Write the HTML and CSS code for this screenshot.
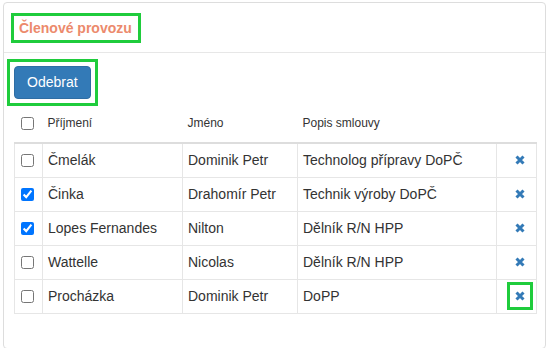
FILE: index.html
```
<!DOCTYPE html>
<html lang="cs">

<head>
    <meta charset="UTF-8">
    <meta name="viewport" content="width=device-width, initial-scale=1.0">
    <title>Členové provozu</title>
    <link rel="stylesheet" href="styles.css">
</head>

<body>
    <div class="panel">
        <div class="panel-heading">
            <span class="mark title">Členové provozu</span>
        </div>
        <div class="panel-body">
            <div class="mark btn-wrap">
                <button class="btn">Odebrat</button>
            </div>
            <table class="members">
                <colgroup>
                    <col class="c-check">
                    <col class="c-last">
                    <col class="c-first">
                    <col class="c-desc">
                    <col class="c-action">
                </colgroup>
                <thead>
                    <tr>
                        <th class="check"><input type="checkbox"></th>
                        <th>Příjmení</th>
                        <th>Jméno</th>
                        <th>Popis smlouvy</th>
                        <th></th>
                    </tr>
                </thead>
                <tbody>
                    <tr>
                        <td class="check"><input type="checkbox"></td>
                        <td>Čmelák</td>
                        <td>Dominik Petr</td>
                        <td>Technolog přípravy DoPČ</td>
                        <td class="action"><span class="remove"><svg viewBox="0 0 10 10"><path d="M1.5 1.5 8.5 8.5 M8.5 1.5 1.5 8.5"/></svg></span></td>
                    </tr>
                    <tr>
                        <td class="check"><input type="checkbox" checked></td>
                        <td>Činka</td>
                        <td>Drahomír Petr</td>
                        <td>Technik výroby DoPČ</td>
                        <td class="action"><span class="remove"><svg viewBox="0 0 10 10"><path d="M1.5 1.5 8.5 8.5 M8.5 1.5 1.5 8.5"/></svg></span></td>
                    </tr>
                    <tr>
                        <td class="check"><input type="checkbox" checked></td>
                        <td>Lopes Fernandes</td>
                        <td>Nilton</td>
                        <td>Dělník R/N HPP</td>
                        <td class="action"><span class="remove"><svg viewBox="0 0 10 10"><path d="M1.5 1.5 8.5 8.5 M8.5 1.5 1.5 8.5"/></svg></span></td>
                    </tr>
                    <tr>
                        <td class="check"><input type="checkbox"></td>
                        <td>Wattelle</td>
                        <td>Nicolas</td>
                        <td>Dělník R/N HPP</td>
                        <td class="action"><span class="remove"><svg viewBox="0 0 10 10"><path d="M1.5 1.5 8.5 8.5 M8.5 1.5 1.5 8.5"/></svg></span></td>
                    </tr>
                    <tr>
                        <td class="check"><input type="checkbox"></td>
                        <td>Procházka</td>
                        <td>Dominik Petr</td>
                        <td>DoPP</td>
                        <td class="action"><span class="remove marked"><svg viewBox="0 0 10 10"><path d="M1.5 1.5 8.5 8.5 M8.5 1.5 1.5 8.5"/></svg></span></td>
                    </tr>
                </tbody>
            </table>
        </div>
    </div>
</body>

</html>
```

FILE: styles.css
```
* {
    padding: 0;
    margin: 0;
    box-sizing: border-box;
}

body {
    font-family: "Liberation Sans", Arial, sans-serif;
    font-size: 14px;
    color: #333;
    background-color: #fff;
}

.panel {
    margin: 2px 4px 0 3px;
    border: 1px solid #ddd;
    border-radius: 4px;
}

.panel-heading {
    padding: 10px 7px 9px;
    border-bottom: 1px solid #e7e7e7;
}

/* zelene oramovani zvyraznenych prvku */
.mark {
    display: inline-block;
    border: 3px solid #1fcc3c;
}

.title {
    padding: 4px 6px 4px 5px;
    font-size: 14px;
    line-height: 16px;
    font-weight: bold;
    color: #ec8a6c;
}

.panel-body {
    padding: 6px 10px 10px;
}

.btn-wrap {
    margin-left: -7px;
    padding: 4px;
}

.btn {
    display: block;
    font-family: inherit;
    font-size: 14px;
    line-height: 19px;
    padding: 6px 12px;
    color: #fff;
    background-color: #337ab7;
    border: 1px solid #2e6da4;
    border-radius: 4px;
}

.members {
    width: 522px;
    margin: 4px 0 24px;
    table-layout: fixed;
    border-collapse: collapse;
}

.c-check { width: 28px; }
.c-last { width: 140px; }
.c-first { width: 115px; }
.c-desc { width: 199px; }
.c-action { width: 40px; }

.members th {
    font-size: 12px;
    font-weight: normal;
    line-height: 17px;
    text-align: left;
    padding: 5px 5px 10px;
    vertical-align: middle;
    border-bottom: 2px solid #ddd;
}

.members td {
    padding: 6px 5px 7px;
    line-height: 20px;
    vertical-align: middle;
    border: 1px solid #e6e6e6;
}

.members input[type="checkbox"] {
    display: block;
    width: 13px;
    height: 13px;
    margin: 0 0 0 1px;
}

.members .action {
    padding: 2px 0 3px 10px;
}

.remove {
    display: inline-block;
    vertical-align: middle;
    padding: 6px 5px;
    border: 3px solid transparent;
}

.remove.marked {
    border-color: #1fcc3c;
}

.remove svg {
    display: block;
    width: 10px;
    height: 10px;
    fill: none;
    stroke: #337ab7;
    stroke-width: 3;
}
```
